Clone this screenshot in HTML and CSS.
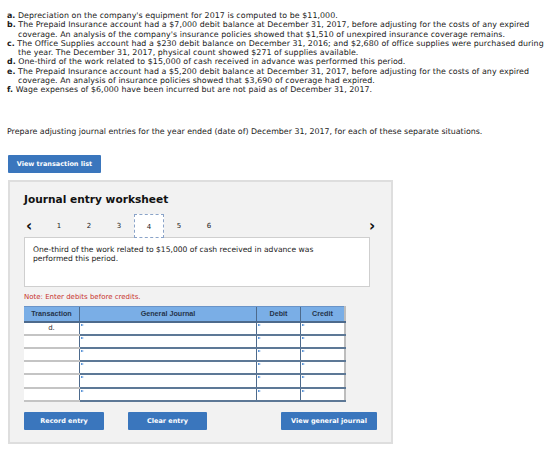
FILE: index.html
```html
<!DOCTYPE html>
<html>
<head lang="en">
    <meta charset="UTF-8">
    <title>Journal entry worksheet</title>
    <link rel="stylesheet" href="styles.css">
</head>
<body>
    <!--题目-->
    <ul class="items">
        <li><b>a.</b> Depreciation on the company's equipment for 2017 is computed to be $11,000.</li>
        <li><b>b.</b> The Prepaid Insurance account had a $7,000 debit balance at December 31, 2017, before adjusting for the costs of any expired coverage. An analysis of the company's insurance policies showed that $1,510 of unexpired insurance coverage remains.</li>
        <li><b>c.</b> The Office Supplies account had a $230 debit balance on December 31, 2016; and $2,680 of office supplies were purchased during the year. The December 31, 2017, physical count showed $271 of supplies available.</li>
        <li><b>d.</b> One-third of the work related to $15,000 of cash received in advance was performed this period.</li>
        <li><b>e.</b> The Prepaid Insurance account had a $5,200 debit balance at December 31, 2017, before adjusting for the costs of any expired coverage. An analysis of insurance policies showed that $3,690 of coverage had expired.</li>
        <li class="last"><b>f.</b> Wage expenses of $6,000 have been incurred but are not paid as of December 31, 2017.</li>
    </ul>

    <p class="prompt">Prepare adjusting journal entries for the year ended (date of) December 31, 2017, for each of these separate situations.</p>

    <button class="btn btn-list">View transaction list</button>

    <!--工作表-->
    <div class="sheet">
        <h2>Journal entry worksheet</h2>

        <div class="tabs">
            <span class="arrow">&lsaquo;</span>
            <span class="tab">1</span>
            <span class="tab">2</span>
            <span class="tab">3</span>
            <span class="tab current">4</span>
            <span class="tab">5</span>
            <span class="tab">6</span>
            <span class="arrow next">&rsaquo;</span>
        </div>

        <div class="desc">One-third of the work related to $15,000 of cash received in advance was performed this period.</div>

        <p class="note">Note: Enter debits before credits.</p>

        <table class="journal">
            <tr>
                <th class="c-trans">Transaction</th>
                <th class="c-gj">General Journal</th>
                <th class="c-num">Debit</th>
                <th class="c-num">Credit</th>
            </tr>
            <tr><td class="trans">d.</td><td class="inp"></td><td class="inp"></td><td class="inp"></td></tr>
            <tr><td class="trans"></td><td class="inp"></td><td class="inp"></td><td class="inp"></td></tr>
            <tr><td class="trans"></td><td class="inp"></td><td class="inp"></td><td class="inp"></td></tr>
            <tr><td class="trans"></td><td class="inp"></td><td class="inp"></td><td class="inp"></td></tr>
            <tr><td class="trans"></td><td class="inp"></td><td class="inp"></td><td class="inp"></td></tr>
            <tr><td class="trans"></td><td class="inp"></td><td class="inp"></td><td class="inp"></td></tr>
        </table>

        <div class="actions">
            <button class="btn btn-record">Record entry</button>
            <button class="btn btn-clear">Clear entry</button>
            <button class="btn btn-view">View general journal</button>
        </div>
    </div>
</body>
</html>
```

FILE: styles.css
```css
* {
    padding: 0;
    margin: 0;
    list-style: none;
    border: 0;
}

body {
    width: 560px;
    padding: 11px 8px 0 7px;
    box-sizing: border-box;
    font-family: "DejaVu Sans", Verdana, sans-serif;
    color: #1a1a1a;
    background: #fff;
}

.items li {
    font-size: 7.9px;
    line-height: 9.3px;
    letter-spacing: 0.05px;
    padding-left: 11px;
    text-indent: -11px;
}

.items li b {
    font-weight: bold;
}

.prompt {
    font-size: 7.9px;
    margin-top: 32px;
    line-height: 10px;
}

.btn {
    display: block;
    height: 18px;
    background: #3a76bd;
    color: #fff;
    font-family: "DejaVu Sans", Verdana, sans-serif;
    font-weight: bold;
    font-size: 6.5px;
    border-radius: 1px;
    cursor: pointer;
}

.btn-list {
    width: 93px;
    margin: 18px 0 0 1px;
}

.sheet {
    width: 385px;
    height: 264px;
    margin: 7px 0 0 1px;
    box-sizing: border-box;
    border: 2px solid #dedede;
    background: #f2f2f2;
    padding: 0 14px;
}

.sheet h2 {
    font-size: 10.6px;
    font-weight: bold;
    color: #111;
    margin-top: 10px;
    line-height: 14px;
}

.tabs {
    display: flex;
    align-items: center;
    height: 24px;
    margin-top: 8px;
    font-size: 7px;
    color: #222;
}

.tabs .arrow {
    width: 18px;
    padding-left: 2px;
    font-size: 15px;
    font-weight: bold;
    line-height: 24px;
    color: #111;
}

.tabs .next {
    margin-left: auto;
    margin-right: -4px;
    width: 12px;
}

.tab {
    width: 30px;
    height: 24px;
    line-height: 24px;
    text-align: center;
    box-sizing: border-box;
}

.tab.current {
    border: 1px dashed #8aa3c8;
    background: #fff;
    position: relative;
    z-index: 1;
    margin-bottom: -1px;
}

.desc {
    width: 346px;
    height: 50px;
    box-sizing: border-box;
    margin-top: -1px;
    background: #fff;
    border: 1px solid #cfcfcf;
    padding: 7px 30px 7px 8px;
    font-size: 7.6px;
    line-height: 9.5px;
    color: #222;
}

.note {
    font-size: 7px;
    color: #c8332e;
    margin-top: 6px;
    line-height: 9px;
}

.journal {
    margin-top: 4px;
    border-collapse: collapse;
    width: 318px;
    table-layout: fixed;
    border-bottom: 2px solid #bdbdbd;
    border-right: 2px solid #bdbdbd;
}

.journal th {
    height: 14px;
    background: #7aaee6;
    font-family: "Liberation Sans", Arial, sans-serif;
    font-size: 7.2px;
    font-weight: bold;
    color: #25344a;
    border-bottom: 2px solid #4d6a8c;
    border-top: 1px solid #6a94c8;
}

.journal .c-trans { width: 55px; }
.journal .c-gj { width: 176px; border-left: 1px solid #4d6a8c; }
.journal .c-num { width: 43px; border-left: 1px solid #4d6a8c; }

.journal td {
    height: 11.2px;
    background: #fff;
}

.journal .trans {
    text-align: center;
    font-size: 7px;
    color: #333;
    vertical-align: top;
    line-height: 10px;
    border-bottom: 2px solid #c4c4c4;
}

.journal .inp {
    position: relative;
    border-left: 1px solid #4d6a8c;
    border-bottom: 2px solid #5d7896;
}

/* 输入格左上角的小三角 */
.journal .inp::before {
    content: "";
    position: absolute;
    left: 1px;
    top: 1px;
    border-left: 3px solid #3a7fd0;
    border-top: 1.5px solid transparent;
    border-bottom: 1.5px solid transparent;
}

.actions {
    display: flex;
    margin-top: 10px;
}

.actions .btn {
    height: 18px;
}

.btn-record {
    width: 80px;
}

.btn-clear {
    width: 79px;
    margin-left: 24px;
}

.btn-view {
    width: 96px;
    margin-left: 74px;
}
```
